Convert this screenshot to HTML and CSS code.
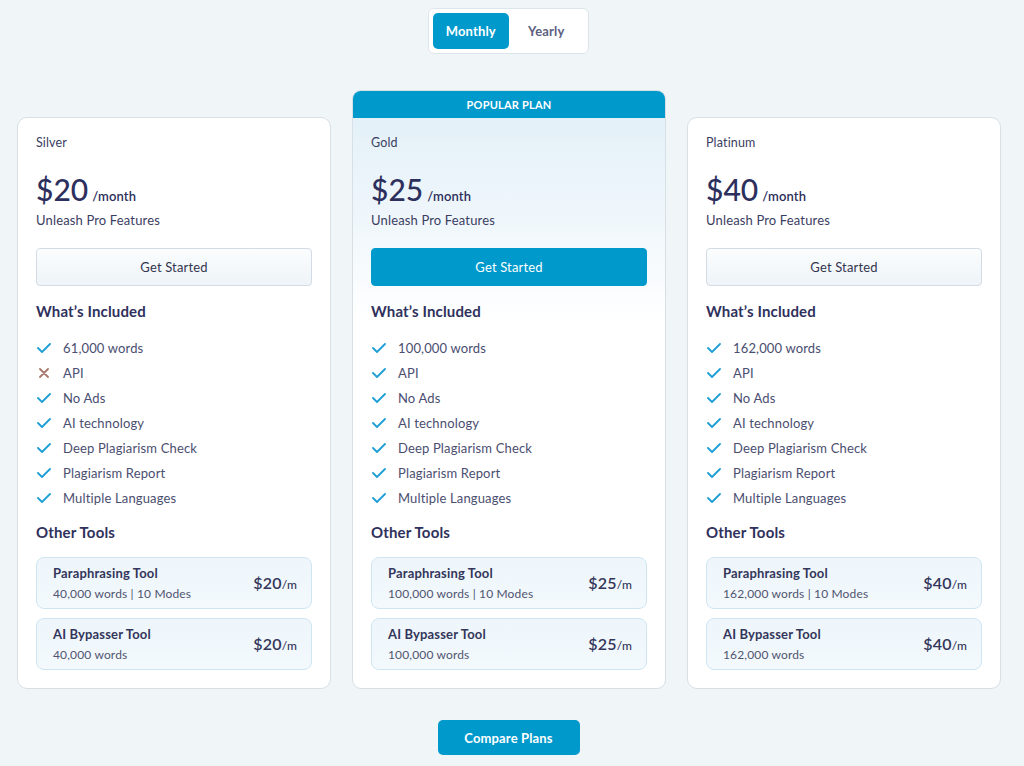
FILE: index.html
```html
<!DOCTYPE html>
<html>
<head>
<meta charset="utf-8">
<link rel="stylesheet" href="styles.css">
</head>
<body>
<div class="page">
  <div class="toggle-wrap">
    <div class="toggle">
      <span class="tab active">Monthly</span>
      <span class="tab">Yearly</span>
    </div>
  </div>

  <div class="cards">
    <div class="card">
      <div class="card-body">
        <div class="plan">Silver</div>
        <div class="price"><span class="amount">$20</span><span class="per">/month</span></div>
        <div class="tag">Unleash Pro Features</div>
        <div class="btn">Get Started</div>
        <div class="section">What’s Included</div>
        <ul class="features">
          <li><svg class="ic" viewBox="0 0 14 10"><path d="M1 5 L5 9 L13 1" class="chk"/></svg>61,000 words</li>
          <li><svg class="ic" viewBox="0 0 14 10"><path d="M3 1 L11 9 M11 1 L3 9" class="xx"/></svg>API</li>
          <li><svg class="ic" viewBox="0 0 14 10"><path d="M1 5 L5 9 L13 1" class="chk"/></svg>No Ads</li>
          <li><svg class="ic" viewBox="0 0 14 10"><path d="M1 5 L5 9 L13 1" class="chk"/></svg>AI technology</li>
          <li><svg class="ic" viewBox="0 0 14 10"><path d="M1 5 L5 9 L13 1" class="chk"/></svg>Deep Plagiarism Check</li>
          <li><svg class="ic" viewBox="0 0 14 10"><path d="M1 5 L5 9 L13 1" class="chk"/></svg>Plagiarism Report</li>
          <li><svg class="ic" viewBox="0 0 14 10"><path d="M1 5 L5 9 L13 1" class="chk"/></svg>Multiple Languages</li>
        </ul>
        <div class="section other">Other Tools</div>
        <div class="tools">
          <div class="tool">
            <div class="tool-info"><div class="tool-name">Paraphrasing Tool</div><div class="tool-sub">40,000 words | 10 Modes</div></div>
            <div class="tool-price">$20<span>/m</span></div>
          </div>
          <div class="tool">
            <div class="tool-info"><div class="tool-name">AI Bypasser Tool</div><div class="tool-sub">40,000 words</div></div>
            <div class="tool-price">$20<span>/m</span></div>
          </div>
        </div>
      </div>
    </div>

    <div class="card popular">
      <div class="pop-head">POPULAR PLAN</div>
      <div class="card-body">
        <div class="plan">Gold</div>
        <div class="price"><span class="amount">$25</span><span class="per">/month</span></div>
        <div class="tag">Unleash Pro Features</div>
        <div class="btn primary">Get Started</div>
        <div class="section">What’s Included</div>
        <ul class="features">
          <li><svg class="ic" viewBox="0 0 14 10"><path d="M1 5 L5 9 L13 1" class="chk"/></svg>100,000 words</li>
          <li><svg class="ic" viewBox="0 0 14 10"><path d="M1 5 L5 9 L13 1" class="chk"/></svg>API</li>
          <li><svg class="ic" viewBox="0 0 14 10"><path d="M1 5 L5 9 L13 1" class="chk"/></svg>No Ads</li>
          <li><svg class="ic" viewBox="0 0 14 10"><path d="M1 5 L5 9 L13 1" class="chk"/></svg>AI technology</li>
          <li><svg class="ic" viewBox="0 0 14 10"><path d="M1 5 L5 9 L13 1" class="chk"/></svg>Deep Plagiarism Check</li>
          <li><svg class="ic" viewBox="0 0 14 10"><path d="M1 5 L5 9 L13 1" class="chk"/></svg>Plagiarism Report</li>
          <li><svg class="ic" viewBox="0 0 14 10"><path d="M1 5 L5 9 L13 1" class="chk"/></svg>Multiple Languages</li>
        </ul>
        <div class="section other">Other Tools</div>
        <div class="tools">
          <div class="tool">
            <div class="tool-info"><div class="tool-name">Paraphrasing Tool</div><div class="tool-sub">100,000 words | 10 Modes</div></div>
            <div class="tool-price">$25<span>/m</span></div>
          </div>
          <div class="tool">
            <div class="tool-info"><div class="tool-name">AI Bypasser Tool</div><div class="tool-sub">100,000 words</div></div>
            <div class="tool-price">$25<span>/m</span></div>
          </div>
        </div>
      </div>
    </div>

    <div class="card">
      <div class="card-body">
        <div class="plan">Platinum</div>
        <div class="price"><span class="amount">$40</span><span class="per">/month</span></div>
        <div class="tag">Unleash Pro Features</div>
        <div class="btn">Get Started</div>
        <div class="section">What’s Included</div>
        <ul class="features">
          <li><svg class="ic" viewBox="0 0 14 10"><path d="M1 5 L5 9 L13 1" class="chk"/></svg>162,000 words</li>
          <li><svg class="ic" viewBox="0 0 14 10"><path d="M1 5 L5 9 L13 1" class="chk"/></svg>API</li>
          <li><svg class="ic" viewBox="0 0 14 10"><path d="M1 5 L5 9 L13 1" class="chk"/></svg>No Ads</li>
          <li><svg class="ic" viewBox="0 0 14 10"><path d="M1 5 L5 9 L13 1" class="chk"/></svg>AI technology</li>
          <li><svg class="ic" viewBox="0 0 14 10"><path d="M1 5 L5 9 L13 1" class="chk"/></svg>Deep Plagiarism Check</li>
          <li><svg class="ic" viewBox="0 0 14 10"><path d="M1 5 L5 9 L13 1" class="chk"/></svg>Plagiarism Report</li>
          <li><svg class="ic" viewBox="0 0 14 10"><path d="M1 5 L5 9 L13 1" class="chk"/></svg>Multiple Languages</li>
        </ul>
        <div class="section other">Other Tools</div>
        <div class="tools">
          <div class="tool">
            <div class="tool-info"><div class="tool-name">Paraphrasing Tool</div><div class="tool-sub">162,000 words | 10 Modes</div></div>
            <div class="tool-price">$40<span>/m</span></div>
          </div>
          <div class="tool">
            <div class="tool-info"><div class="tool-name">AI Bypasser Tool</div><div class="tool-sub">162,000 words</div></div>
            <div class="tool-price">$40<span>/m</span></div>
          </div>
        </div>
      </div>
    </div>
  </div>

  <div class="compare-wrap">
    <div class="compare">Compare Plans</div>
  </div>
</div>
</body>
</html>
```

FILE: styles.css
```css
* { box-sizing: border-box; }
html, body { margin: 0; padding: 0; }
body {
  background: #f0f5f8;
  font-family: "Lato", "Inter", "Liberation Sans", sans-serif;
  color: #2f315c;
  width: 1024px;
  height: 766px;
  overflow: hidden;
  letter-spacing: 0.15px;
}
.page { padding: 8px 0 0 17px; width: 1017px; }

.toggle-wrap { display: flex; justify-content: center; width: 983px; }
.toggle {
  display: flex;
  background: #fff;
  border: 1px solid #dde5ec;
  border-radius: 6px;
  padding: 4px;
  width: 161px;
  height: 46px;
}
.tab {
  width: 79px;
  height: 36px;
  display: flex;
  align-items: center;
  justify-content: center;
  font-size: 13px;
  font-weight: 700;
  color: #5c6080;
  border-radius: 5px;
}
.tab.active { background: #0099cc; color: #fff; }

.cards {
  display: flex;
  align-items: flex-end;
  gap: 21px;
  margin-top: 36px;
}
.card {
  width: 314px;
  background: #fff;
  border: 1px solid #d8dfe5;
  border-radius: 10px;
  overflow: hidden;
}
.card.popular {
  border-radius: 9px;
  background: linear-gradient(180deg, #e1eff7 0px, #eef6fb 120px, #ffffff 230px);
}
.pop-head {
  height: 27px;
  background: #0099cc;
  color: #fff;
  font-size: 11px;
  font-weight: 700;
  display: flex;
  align-items: center;
  justify-content: center;
  letter-spacing: 0.2px;
}
.card-body { padding: 17px 18px 17px 18px; height: 570px; }

.plan { font-size: 12.5px; line-height: 16px; color: #3a3d62; }
.price { margin-top: 21px; display: flex; align-items: baseline; height: 34px; }
.amount { font-size: 30px; line-height: 34px; color: #2d2f5c; font-weight: 500; letter-spacing: 0; }
.per { font-size: 13px; margin-left: 4px; color: #2d2f5c; font-weight: 600; }
.tag { margin-top: 5px; font-size: 13px; line-height: 18px; color: #3a3d62; }

.btn {
  margin-top: 19px;
  height: 38px;
  border: 1px solid #d3dce4;
  border-radius: 4px;
  background: linear-gradient(180deg, #fbfdfe, #eef4f8);
  display: flex;
  align-items: center;
  justify-content: center;
  font-size: 13px;
  color: #33364f;
}
.btn.primary { background: #0099cc; border-color: #0099cc; color: #fff; }

.section { margin-top: 15px; font-size: 15px; line-height: 20px; font-weight: 700; color: #2f315c; }
.section.other { margin-top: 12px; }

.features { list-style: none; margin: 14px 0 0 0; padding: 0; }
.features li {
  height: 25px;
  display: flex;
  align-items: center;
  font-size: 13px;
  color: #4a4e70;
}
.ic { width: 14px; height: 10px; margin-left: 1px; margin-right: 12px; flex-shrink: 0; }
.chk { fill: none; stroke: #1e9ed4; stroke-width: 1.8; stroke-linecap: round; stroke-linejoin: round; }
.xx { fill: none; stroke: #a8796b; stroke-width: 1.8; stroke-linecap: round; }

.tools { margin-top: 15px; display: flex; flex-direction: column; gap: 9px; }
.tool {
  height: 52px;
  background: linear-gradient(180deg, #eef6fb, #f3f9fd);
  border: 1px solid #cfe5f2;
  border-radius: 8px;
  padding: 0 14px 0 16px;
  display: flex;
  align-items: center;
  justify-content: space-between;
}
.tool-name { font-size: 13px; line-height: 16px; font-weight: 700; color: #33365a; }
.tool-sub { margin-top: 5px; font-size: 12px; line-height: 16px; color: #50546f; }
.tool-price { font-size: 16px; font-weight: 600; color: #33365a; padding-bottom: 2px; }
.tool-price span { font-size: 12px; font-weight: 500; }

.compare-wrap { display: flex; justify-content: center; margin-top: 31px; width: 983px; }
.compare {
  width: 142px;
  height: 35px;
  background: #0099cc;
  border-radius: 5px;
  color: #fff;
  font-size: 13px;
  font-weight: 700;
  display: flex;
  align-items: center;
  justify-content: center;
}
```
